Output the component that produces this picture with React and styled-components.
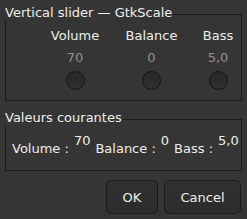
import styled, { createGlobalStyle } from "styled-components";

const Global = createGlobalStyle`
  html, body {
    margin: 0;
    padding: 0;
    background: #353535;
  }
  body {
    font-family: "DejaVu Sans", sans-serif;
    font-size: 13px;
    color: #eeeeec;
  }
`;

const Window = styled.div`
  width: 247px;
  height: 219px;
  box-sizing: border-box;
  padding: 5px 5px 0 5px;
  display: flex;
  flex-direction: column;
  background: #353535;
`;

const Frame = styled.div`
  display: flex;
  flex-direction: column;
  margin-top: ${(p) => p.$top || 0}px;
`;

const FrameHead = styled.div`
  display: flex;
  height: 15px;
  line-height: 15px;
`;

const FrameLabel = styled.span`
  white-space: nowrap;
  padding-right: 1px;
`;

const FrameRule = styled.div`
  flex: 1;
  margin-top: ${(p) => p.$offset}px;
  border-top: 1px solid #1b1b1b;
  border-right: 1px solid #1b1b1b;
`;

const FrameBody = styled.div`
  border: 1px solid #1b1b1b;
  border-top: none;
  height: ${(p) => p.$h}px;
  box-sizing: border-box;
`;

const Sliders = styled.div`
  display: grid;
  grid-template-columns: 76px 77px 50px;
  padding: 8px 0 0 31px;
`;

const Column = styled.div`
  display: flex;
  flex-direction: column;
  align-items: center;
  line-height: 15px;
  padding-left: ${(p) => p.$pad || 0}px;
  background-image: ${(p) =>
    p.$sep
      ? "repeating-linear-gradient(to bottom, #454545 0 1px, transparent 1px 6px)"
      : "none"};
  background-repeat: no-repeat;
  background-position: 0 5px;
  background-size: 1px 62px;
`;

const Value = styled.span`
  margin-top: 7px;
  color: #8e9192;
`;

const Knob = styled.div`
  margin-top: 6px;
  width: 19px;
  height: 19px;
  box-sizing: border-box;
  border-radius: 50%;
  border: 1px solid #141414;
  background: linear-gradient(to bottom, #2a2a2a 40%, #313131 100%);
`;

const Readout = styled.div`
  display: flex;
  align-items: flex-start;
  gap: 5px;
  padding: 8px 0 0 6px;
  line-height: 15px;
  white-space: nowrap;
`;

const Key = styled.span`
  margin-top: 8px;
`;

const Buttons = styled.div`
  display: flex;
  justify-content: flex-end;
  gap: 6px;
  margin-top: 9px;
  padding-right: 1px;
`;

const Button = styled.button`
  width: ${(p) => p.$w}px;
  height: 34px;
  box-sizing: border-box;
  border: 1px solid #1b1b1b;
  border-radius: 5px;
  background: linear-gradient(to bottom, #303030, #2c2c2c);
  color: #eeeeec;
  font-family: "DejaVu Sans", sans-serif;
  font-size: 13px;
  padding: 0;
`;

export default function App() {
  const sliders = [
    { name: "Volume", value: "70" },
    { name: "Balance", value: "0" },
    { name: "Bass", value: "5,0" },
  ];
  return (
    <Window>
      <Global />
      <Frame>
        <FrameHead>
          <FrameLabel>Vertical slider — GtkScale</FrameLabel>
          <FrameRule $offset={9} />
        </FrameHead>
        <FrameBody $h={81}>
          <Sliders>
            {sliders.map((s, i) => (
              <Column key={s.name} $sep={i > 0} $pad={i === 2 ? 6 : 0}>
                <span>{s.name}</span>
                <Value>{s.value}</Value>
                <Knob />
              </Column>
            ))}
          </Sliders>
        </FrameBody>
      </Frame>
      <Frame $top={9}>
        <FrameHead>
          <FrameLabel>Valeurs courantes</FrameLabel>
          <FrameRule $offset={9} />
        </FrameHead>
        <FrameBody $h={46}>
          <Readout>
            <Key>Volume :</Key>
            <span>70</span>
            <Key>Balance :</Key>
            <span>0</span>
            <Key>Bass :</Key>
            <span>5,0</span>
          </Readout>
        </FrameBody>
      </Frame>
      <Buttons>
        <Button $w={52}>OK</Button>
        <Button $w={77}>Cancel</Button>
      </Buttons>
    </Window>
  );
}
